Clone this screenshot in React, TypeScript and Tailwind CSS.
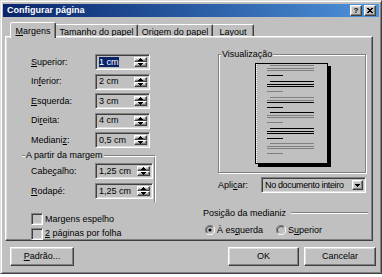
import React from "react";

const raised =
  "border border-t-white border-l-white border-r-[#404040] border-b-[#404040] shadow-[inset_-1px_-1px_0_#808080,inset_1px_1px_0_#dfdfdf]";
const sunken =
  "border border-t-[#808080] border-l-[#808080] border-r-white border-b-white shadow-[inset_1px_1px_0_#404040,inset_-1px_-1px_0_#dfdfdf]";
const etchedBox =
  "border border-[#808080] shadow-[inset_1px_1px_0_#fff,1px_1px_0_#fff]";

function U({ children }: { children: React.ReactNode }) {
  return <span className="underline underline-offset-[1px]">{children}</span>;
}

function Arrow({ up }: { up?: boolean }) {
  return (
    <svg width="5" height="3" viewBox="0 0 5 3" shapeRendering="crispEdges">
      {up ? (
        <path d="M2 0h1v1h1v1h1v1H0V2h1V1h1z" fill="#000" />
      ) : (
        <path d="M0 0h5v1H4v1H3v1H2V2H1V1H0z" fill="#000" />
      )}
    </svg>
  );
}

function Spin({
  value,
  wide,
  selected,
}: {
  value: string;
  wide?: boolean;
  selected?: boolean;
}) {
  return (
    <div
      className={`flex h-[16px] items-center bg-[#c0c0c0] p-[2px] ${sunken} ${
        wide ? "w-[58px]" : "w-[55px]"
      }`}
    >
      <div className="flex-1 pl-[1px] leading-[11px]">
        {selected ? (
          <span className="bg-[#0a246a] text-white">{value}</span>
        ) : (
          <span>{value}</span>
        )}
      </div>
      <div className="flex h-full w-[13px] flex-col">
        <div className={`flex flex-1 items-center justify-center ${raised}`}>
          <Arrow up />
        </div>
        <div className={`flex flex-1 items-center justify-center ${raised}`}>
          <Arrow />
        </div>
      </div>
    </div>
  );
}

function Row({
  label,
  value,
  wide,
  selected,
}: {
  label: React.ReactNode;
  value: string;
  wide?: boolean;
  selected?: boolean;
}) {
  return (
    <div className="flex h-[16px] items-center">
      <div className="w-[64px] leading-[11px]">{label}</div>
      <Spin value={value} wide={wide} selected={selected} />
    </div>
  );
}

function Check({ label }: { label: React.ReactNode }) {
  return (
    <div className="flex h-[12px] items-center">
      <div className={`h-[12px] w-[12px] bg-[#c0c0c0] ${sunken}`} />
      <span className="ml-[2px] leading-[11px]">{label}</span>
    </div>
  );
}

function Radio({ checked }: { checked?: boolean }) {
  return (
    <svg width="10" height="10" viewBox="0 0 10 10">
      <circle cx="5" cy="5" r="4.3" fill="#c0c0c0" />
      <path d="M1.6 8.4 A4.5 4.5 0 0 1 8.4 1.6" stroke="#808080" strokeWidth="1" fill="none" />
      <path d="M8.4 1.6 A4.5 4.5 0 0 1 1.6 8.4" stroke="#ffffff" strokeWidth="1" fill="none" />
      <path d="M2.4 7.6 A3.5 3.5 0 0 1 7.6 2.4" stroke="#404040" strokeWidth="1" fill="none" />
      {checked && <circle cx="5" cy="5" r="1.6" fill="#000" />}
    </svg>
  );
}

type Para = { y: number; c: string[] };
const paras: Para[] = [
  { y: 2, c: ["#808080", "#808080", "#808080", "#000"] },
  { y: 18, c: ["#000", "#000", "#000", "#808080"] },
  { y: 34, c: ["#808080", "#808080", "#000", "#000"] },
  { y: 49, c: ["#000", "#808080", "#808080", "#808080"] },
  { y: 65, c: ["#000", "#000", "#000", "#000"] },
  { y: 80, c: ["#808080", "#808080", "#808080", "#808080"] },
];

function PagePreview() {
  return (
    <svg width="77" height="105" viewBox="0 0 77 105" shapeRendering="crispEdges">
      <rect x="3" y="3" width="73" height="101" fill="#000" />
      <rect x="0.5" y="0.5" width="72" height="100" fill="#c0c0c0" stroke="#000" />
      <line x1="1.5" y1="1" x2="1.5" y2="100" stroke="#fff" strokeDasharray="1 1" />
      {paras.map((p, i) => (
        <g key={i}>
          <rect x="15" y={p.y} width="44" height="1" fill={p.c[0]} />
          <rect x="12" y={p.y + 3} width="47" height="1" fill={p.c[1]} />
          <rect x="12" y={p.y + 5} width="47" height="1" fill={p.c[2]} />
          <rect x="12" y={p.y + 10} width="16" height="1" fill={p.c[3]} />
        </g>
      ))}
    </svg>
  );
}

export default function App() {
  return (
    <div className="h-[277px] w-[382px] bg-white font-['Liberation_Sans',Arial,sans-serif] text-[9px] text-black">
      <div
        className={`flex h-[274px] w-[382px] flex-col bg-[#c0c0c0] p-[2px] pt-[3px] border border-t-[#dfdfdf] border-l-[#dfdfdf] border-r-[#404040] border-b-[#404040] shadow-[inset_1px_1px_0_#fff,inset_-1px_-1px_0_#808080]`}
      >
        {/* Title bar */}
        <div className="flex h-[13px] items-center bg-linear-to-r from-[#0a246a] to-[#4f94dc] pl-[4px] pr-[3px]">
          <span className="flex-1 text-[9px] font-bold leading-[11px] text-white">
            Configurar página
          </span>
          <div className={`flex h-[11px] w-[12px] items-center justify-center bg-[#c0c0c0] ${raised}`}>
            <span className="text-[8px] font-bold leading-[8px]">?</span>
          </div>
          <div className={`ml-[2px] flex h-[11px] w-[12px] items-center justify-center bg-[#c0c0c0] ${raised}`}>
            <svg width="6" height="5" viewBox="0 0 6 5" shapeRendering="crispEdges">
              <path d="M0 0h2v1h2V0h2v1H5v1H4v1h1v1h1v1H4V4H2v1H0V4h1V3h1V2H1V1H0z" fill="#000" />
            </svg>
          </div>
        </div>

        {/* Tabs */}
        <div className="mt-[5px] flex h-[14px] items-end pl-[7px]">
          <div className="relative z-10 -mb-[2px] flex h-[16px] w-[46px] items-start justify-center rounded-tl-[2px] rounded-tr-[2px] border-t border-l border-r border-t-white border-l-white border-r-[#404040] bg-[#c0c0c0] pt-[3px] shadow-[inset_-1px_0_0_#808080] leading-[11px]">
            <span><U>M</U>argens</span>
          </div>
          <div className="flex h-[12px] w-[82px] items-start justify-center rounded-tr-[2px] border-t border-r border-t-white border-r-[#404040] pt-[2px] shadow-[inset_-1px_0_0_#808080] leading-[11px]">
            <span><U>T</U>amanho do papel</span>
          </div>
          <div className="flex h-[12px] w-[75px] items-start justify-center rounded-tr-[2px] border-t border-r border-t-white border-r-[#404040] pt-[2px] shadow-[inset_-1px_0_0_#808080] leading-[11px]">
            <span><U>O</U>rigem do papel</span>
          </div>
          <div className="flex h-[12px] w-[41px] items-start justify-center rounded-tr-[2px] border-t border-r border-t-white border-r-[#404040] pt-[2px] shadow-[inset_-1px_0_0_#808080] leading-[11px]">
            <span><U>L</U>ayout</span>
          </div>
        </div>

        {/* Panel */}
        <div className="ml-[2px] flex h-[205px] w-[368px] border border-t-white border-l-white border-r-[#404040] border-b-[#404040] shadow-[inset_-1px_-1px_0_#808080,inset_1px_1px_0_#dfdfdf]">
          {/* Left column */}
          <div className="flex w-[194px] flex-col">
            <div className="ml-[25px] mt-[17px] flex flex-col gap-[3.5px]">
              <Row label={<span><U>S</U>uperior:</span>} value="1 cm" selected />
              <Row label={<span>In<U>f</U>erior:</span>} value="2 cm" />
              <Row label={<span><U>E</U>squerda:</span>} value="3 cm" />
              <Row label={<span>Di<U>r</U>eita:</span>} value="4 cm" />
              <Row label={<span>Mediani<U>z</U>:</span>} value="0,5 cm" />
            </div>
            <div className="relative ml-[16px] mt-[7px] h-[47px] w-[134px] border-t border-r border-t-[#808080] border-r-white shadow-[inset_0_1px_0_#fff,inset_-1px_0_0_#808080]">
              <span className="absolute -top-[6px] left-[3px] bg-[#c0c0c0] px-[1px] leading-[11px]">
                A partir da margem
              </span>
              <div className="flex flex-col gap-[4px] pl-[9px] pt-[7px]">
                <Row label={<span>Cabe<U>ç</U>alho:</span>} value="1,25 cm" wide />
                <Row label={<span><U>R</U>odapé:</span>} value="1,25 cm" wide />
              </div>
            </div>
            <div className="ml-[25px] mt-[11px] flex flex-col gap-[2.5px]">
              <Check label={<span>Mar<U>g</U>ens espelho</span>} />
              <Check label={<span><U>2</U> páginas por folha</span>} />
            </div>
          </div>

          {/* Right column */}
          <div className="flex flex-1 flex-col">
            <div className={`relative ml-[18px] mt-[17px] h-[119px] w-[148px] ${etchedBox}`}>
              <span className="absolute -top-[6px] left-[2px] bg-[#c0c0c0] px-[1px] leading-[11px]">
                Visualização
              </span>
              <div className="mt-[8px] flex justify-center pl-[2px]">
                <PagePreview />
              </div>
            </div>
            <div className="ml-[18px] mt-[4px] flex h-[16px] items-center">
              <span className="w-[43px] leading-[11px]">
                Apli<U>c</U>ar:
              </span>
              <div className={`flex h-[16px] w-[105px] items-center bg-[#c0c0c0] p-[2px] ${sunken}`}>
                <span className="flex-1 overflow-hidden whitespace-nowrap pl-[1px] leading-[11px] tracking-[-0.35px]">
                  No documento inteiro
                </span>
                <div className={`flex h-full w-[11px] shrink-0 items-center justify-center ${raised}`}>
                  <Arrow />
                </div>
              </div>
            </div>
            <div className="ml-[3px] mr-[4px] mt-[14px] flex h-[12px] items-center">
              <span className="leading-[11px]">
                Posi<U>ç</U>ão da medianiz
              </span>
              <div className="ml-[5px] h-0 flex-1 border-t border-b border-t-[#808080] border-b-white" />
            </div>
            <div className="ml-[5px] mt-[5px] flex h-[12px] items-center">
              <Radio checked />
              <span className="ml-[2px] leading-[11px]">
                À es<U>q</U>uerda
              </span>
              <div className="ml-[13px] flex items-center">
                <Radio />
                <span className="ml-[2px] leading-[11px]">
                  S<U>u</U>perior
                </span>
              </div>
            </div>
          </div>
        </div>

        {/* Buttons */}
        <div className="mt-[6px] flex h-[19px] pl-[7px] pr-[3px]">
          <div className={`flex w-[64px] items-center justify-center ${raised}`}>
            <span className="leading-[11px]">
              <U>P</U>adrão...
            </span>
          </div>
          <div className={`ml-auto flex w-[71px] items-center justify-center ${raised}`}>
            <span className="leading-[11px]">OK</span>
          </div>
          <div className={`ml-[5px] flex w-[72px] items-center justify-center ${raised}`}>
            <span className="leading-[11px]">Cancelar</span>
          </div>
        </div>
      </div>
    </div>
  );
}
